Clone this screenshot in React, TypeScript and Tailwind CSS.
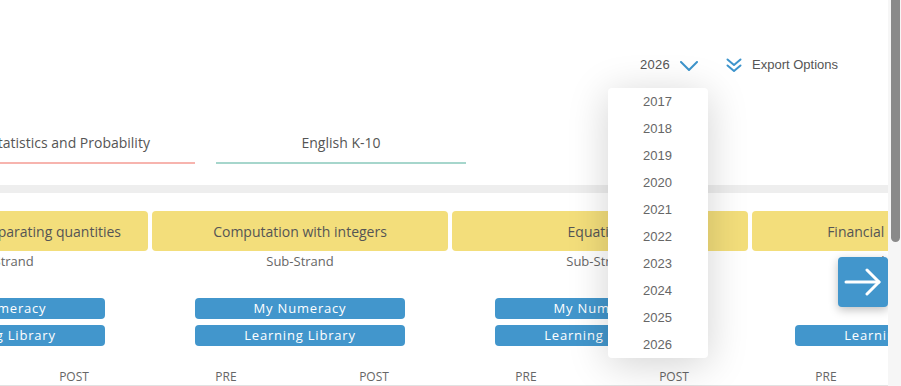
const tabs = [
  { title: "Number and Algebra", line: "border-[#f6d77a]" },
  { title: "Statistics and Probability", line: "border-[#f7b4ae]" },
  { title: "English K-10", line: "border-[#a6d6cc]" },
];

const strands = [
  { title: "Comparing and separating quantities", numeracy: true },
  { title: "Computation with integers", numeracy: true },
  { title: "Equations", numeracy: true },
  { title: "Financial mathematics", numeracy: false },
];

const years = ["2017", "2018", "2019", "2020", "2021", "2022", "2023", "2024", "2025", "2026"];

const App: React.FC = () => {
  return (
    <div className="flex h-[386px] w-[901px] overflow-hidden bg-white font-['Open_Sans',sans-serif]">
      <div className="relative w-[888px] shrink-0 overflow-hidden">
        {/* header */}
        <div className="flex h-[88px] items-start justify-end pr-[50px] pt-[56px] font-['Liberation_Sans',Arial,sans-serif] text-[13px] text-[#555]">
          <div className="flex items-center leading-[18px]">
            <span className="tracking-[0.3px]">2026</span>
            <svg className="ml-[10px] mt-[2px]" width="18" height="10" viewBox="0 0 18 10" fill="none">
              <polyline points="1,1 9,9 17,1" stroke="#3d94cc" strokeWidth="2" strokeLinecap="round" strokeLinejoin="round" />
            </svg>
          </div>
          <div className="ml-[28px] flex items-center leading-[18px]">
            <svg width="16" height="15" viewBox="0 0 16 15" fill="none">
              <polyline points="1.5,1.5 8,7 14.5,1.5" stroke="#3d94cc" strokeWidth="2" strokeLinecap="round" strokeLinejoin="round" />
              <polyline points="1.5,7.5 8,13 14.5,7.5" stroke="#3d94cc" strokeWidth="2" strokeLinecap="round" strokeLinejoin="round" />
            </svg>
            <span className="ml-[10px]">Export Options</span>
          </div>
        </div>

        {/* tabs */}
        <div className="-ml-[326px] flex gap-[21px]">
          {tabs.map((tab) => (
            <div
              key={tab.title}
              className={`w-[250px] shrink-0 border-b-2 pb-[9px] pt-[45px] text-center text-[14px] leading-[20px] text-[#555] ${tab.line}`}
            >
              {tab.title}
            </div>
          ))}
        </div>

        <div className="mt-[21px] h-[8px] bg-[#eeeeee]" />

        {/* strands */}
        <div className="-ml-[150px] mt-[18px] flex">
          {strands.map((s) => (
            <div key={s.title} className="w-[300px] shrink-0 px-[2px]">
              <div className="flex h-[40px] items-center justify-center whitespace-nowrap rounded-[4px] bg-[#f3de7b] text-[14px] text-[#555]">
                {s.title}
              </div>
              <div className="mt-[1px] text-center text-[13px] leading-[18px] text-[#666]">Sub-Strand</div>
              <div className="mt-[28px] flex flex-col items-center gap-[6px] tracking-[0.8px] text-white">
                <div
                  className={`flex h-[21px] w-[210px] items-center justify-center rounded-[4px] text-[13px] ${
                    s.numeracy ? "bg-[#4296cc]" : "bg-transparent"
                  }`}
                >
                  {s.numeracy ? "My Numeracy" : ""}
                </div>
                <div className="flex h-[21px] w-[210px] items-center justify-center rounded-[4px] bg-[#4296cc] text-[13px]">
                  Learning Library
                </div>
              </div>
              <div className="mt-[23px] flex text-[12px] leading-[16px] text-[#666]">
                <span className="w-1/2 text-center">PRE</span>
                <span className="w-1/2 text-center">POST</span>
              </div>
            </div>
          ))}
        </div>
        <div className="h-[6px] bg-[#e2e2e2]" />

        {/* next arrow */}
        <button className="absolute left-[838px] top-[257px] flex h-[50px] w-[50px] items-center justify-center rounded-[4px] bg-[#4296cc] shadow-[0_3px_10px_rgba(0,0,0,0.25)]">
          <svg width="38" height="28" viewBox="0 0 38 28" fill="none">
            <line x1="2" y1="14" x2="35" y2="14" stroke="white" strokeWidth="3" strokeLinecap="round" />
            <polyline points="23,2 35,14 23,26" stroke="white" strokeWidth="3" strokeLinecap="round" strokeLinejoin="round" />
          </svg>
        </button>

        {/* year dropdown */}
        <div className="absolute left-[608px] top-[88px] w-[100px] rounded-[4px] bg-white shadow-[0_6px_40px_rgba(0,0,0,0.18)] font-['Liberation_Sans',Arial,sans-serif]">
          {years.map((y) => (
            <div key={y} className="flex h-[27px] items-center pl-[35px] text-[13px] text-[#666]">
              {y}
            </div>
          ))}
        </div>
      </div>

      {/* scrollbar */}
      <div className="w-[13px] shrink-0 bg-[#f6f6f6] pl-[3px] pr-[1px]">
        <div className="h-[242px] rounded-b-[5px] bg-[#8a8a8a]" />
      </div>
    </div>
  );
};

export default App;
